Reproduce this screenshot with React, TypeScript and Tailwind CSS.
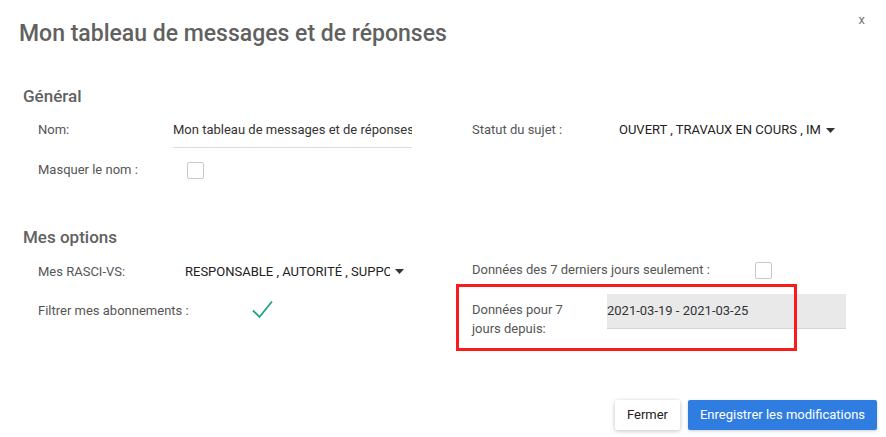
import React from "react";

const Caret: React.FC = () => (
  <svg width="9" height="5" viewBox="0 0 9 5" className="ml-[5px] shrink-0">
    <path d="M0 0h9L4.5 5z" fill="#333" />
  </svg>
);

const Checkbox: React.FC = () => (
  <div className="w-[17px] h-[17px] border border-[#c9c9c9] rounded-[2px] bg-white" />
);

const App: React.FC = () => {
  return (
    <div className="relative w-[886px] h-[437px] bg-white font-['Roboto',sans-serif] text-[13px]">
      {/* Header */}
      <div className="flex justify-between items-start pt-[18px] pl-[19px] pr-[21px]">
        <h1 className="text-[23px] leading-[31px] font-medium text-[#616161]">
          Mon tableau de messages et de réponses
        </h1>
        <span className="text-[13px] leading-[13px] mt-[-5px] text-[#777]">x</span>
      </div>

      {/* Général */}
      <h2 className="mt-[35px] pl-[23px] text-[17px] leading-[24px] font-medium text-[#616161]">
        Général
      </h2>
      <div className="flex mt-[4px]">
        <div className="w-[472px] pl-[38px] flex flex-col gap-[4px]">
          <div className="flex items-center h-[36px]">
            <span className="w-[135px] text-[#555]">Nom:</span>
            <div className="w-[239px] h-[36px] flex items-center border-b border-[#dcdcdc] overflow-hidden whitespace-nowrap text-[#333]">
              Mon tableau de messages et de réponses
            </div>
          </div>
          <div className="flex items-center h-[36px]">
            <span className="w-[149px] text-[#555]">Masquer le nom :</span>
            <Checkbox />
          </div>
        </div>
        <div className="flex flex-col">
          <div className="flex items-center h-[36px]">
            <span className="w-[147px] text-[#555]">Statut du sujet :</span>
            <div className="whitespace-nowrap text-[#222]">OUVERT , TRAVAUX EN COURS , IM</div>
            <Caret />
          </div>
        </div>
      </div>

      {/* Mes options */}
      <h2 className="mt-[37px] pl-[23px] text-[17px] leading-[24px] font-medium text-[#616161]">
        Mes options
      </h2>
      <div className="flex mt-[3px]">
        <div className="w-[472px] pl-[38px] flex flex-col gap-[5px]">
          <div className="flex items-center h-[36px] pt-[3px]">
            <span className="w-[147px] text-[#555]">Mes RASCI-VS:</span>
            <div className="w-[205px] overflow-hidden whitespace-nowrap text-[#222]">
              RESPONSABLE , AUTORITÉ , SUPPORT
            </div>
            <Caret />
          </div>
          <div className="flex items-center h-[36px]">
            <span className="w-[214px] text-[#555]">Filtrer mes abonnements :</span>
            <svg width="21" height="19" viewBox="0 0 21 19" className="mt-[-3px]">
              <path d="M1 10.5 L7.5 17 L20 1.5" fill="none" stroke="#1fa08b" strokeWidth="1.8" />
            </svg>
          </div>
        </div>
        <div className="flex flex-col">
          <div className="flex items-center h-[36px]">
            <span className="w-[283px] text-[#555]">Données des 7 derniers jours seulement :</span>
            <Checkbox />
          </div>
          <div className="flex items-start mt-[6px]">
            <span className="w-[135px] pt-[6px] leading-[19px] text-[#555]">
              Données pour 7
              <br />
              jours depuis:
            </span>
            <div className="w-[239px] h-[35px] flex items-center bg-[#e9e9e9] border-b border-[#d4d4d4] text-[#333]">
              2021-03-19 - 2021-03-25
            </div>
          </div>
        </div>
      </div>

      {/* Footer */}
      <div className="flex justify-end gap-[8px] pr-[9px] mt-[62px]">
        <button className="h-[30px] w-[65px] bg-white rounded-[2px] shadow-[0_1px_4px_rgba(0,0,0,0.25)] text-[#222]">
          Fermer
        </button>
        <button className="h-[30px] w-[189px] bg-[#2f7de1] rounded-[2px] shadow-[0_1px_3px_rgba(0,0,0,0.2)] text-white">
          Enregistrer les modifications
        </button>
      </div>

      {/* Annotation */}
      <div className="absolute left-[456px] top-[284px] w-[341px] h-[67px] border-[3px] border-[#f81c1c] pointer-events-none" />
    </div>
  );
};

export default App;
